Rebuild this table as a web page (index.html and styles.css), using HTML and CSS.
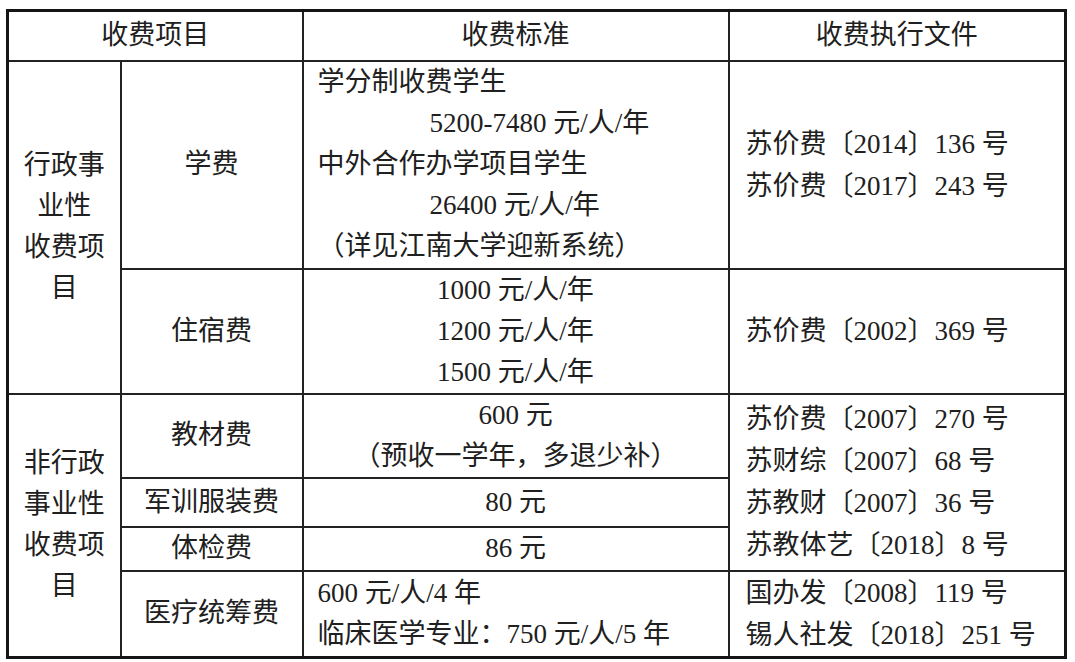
FILE: index.html
```html
<!DOCTYPE html>
<html lang="zh-CN">
<head>
<meta charset="utf-8">
<title>收费项目</title>
<link rel="stylesheet" href="styles.css">
</head>
<body>
<table class="fee">
  <colgroup>
    <col class="c-cat">
    <col class="c-item">
    <col class="c-std">
    <col class="c-doc">
  </colgroup>
  <thead>
    <tr class="r-head">
      <th colspan="2">收费项目</th>
      <th>收费标准</th>
      <th>收费执行文件</th>
    </tr>
  </thead>
  <tbody>
    <tr class="r-tuition">
      <td rowspan="2" class="cat">行政事<br>业性<br>收费项<br>目</td>
      <td class="item">学费</td>
      <td class="std left">
        <div>学分制收费学生</div>
        <div class="ind">5200-7480 元/人/年</div>
        <div>中外合作办学项目学生</div>
        <div class="ind">26400 元/人/年</div>
        <div>（详见江南大学迎新系统）</div>
      </td>
      <td class="doc">
        <div>苏价费〔2014〕136 号</div>
        <div>苏价费〔2017〕243 号</div>
      </td>
    </tr>
    <tr class="r-lodging">
      <td class="item">住宿费</td>
      <td class="std">
        <div>1000 元/人/年</div>
        <div>1200 元/人/年</div>
        <div>1500 元/人/年</div>
      </td>
      <td class="doc">
        <div>苏价费〔2002〕369 号</div>
      </td>
    </tr>
    <tr class="r-books">
      <td rowspan="4" class="cat">非行政<br>事业性<br>收费项<br>目</td>
      <td class="item">教材费</td>
      <td class="std">
        <div>600 元</div>
        <div>（预收一学年，多退少补）</div>
      </td>
      <td rowspan="3" class="doc">
        <div>苏价费〔2007〕270 号</div>
        <div>苏财综〔2007〕68 号</div>
        <div>苏教财〔2007〕36 号</div>
        <div>苏教体艺〔2018〕8 号</div>
      </td>
    </tr>
    <tr class="r-uniform">
      <td class="item">军训服装费</td>
      <td class="std"><div>80 元</div></td>
    </tr>
    <tr class="r-exam">
      <td class="item">体检费</td>
      <td class="std"><div>86 元</div></td>
    </tr>
    <tr class="r-medical">
      <td class="item">医疗统筹费</td>
      <td class="std left">
        <div>600 元/人/4 年</div>
        <div>临床医学专业：750 元/人/5 年</div>
      </td>
      <td class="doc">
        <div>国办发〔2008〕119 号</div>
        <div>锡人社发〔2018〕251 号</div>
      </td>
    </tr>
  </tbody>
</table>
</body>
</html>
```

FILE: styles.css
```css
html, body {
  margin: 0;
  padding: 0;
  background: #ffffff;
}

.fee {
  margin: 9px 0 0 6px;
  width: 1061px;
  table-layout: fixed;
  border-collapse: collapse;
  border: 3px solid #151515;
  font-family: "Liberation Serif", "Noto Sans CJK SC", serif;
  font-size: 27px;
  line-height: 41px;
  color: #202020;
}

.c-cat { width: 113px; }
.c-item { width: 182px; }
.c-std { width: 426px; }
.c-doc { width: 337px; }

.fee th,
.fee td {
  border: 2px solid #222222;
  padding: 0;
  vertical-align: middle;
  text-align: center;
  font-weight: normal;
}

.r-head { height: 50px; }
.r-tuition { height: 208px; }
.r-lodging { height: 124px; }
.r-books { height: 83px; }
.r-uniform { height: 49px; }
.r-exam { height: 44px; }
.r-medical { height: 84px; }

.fee .cat {
  padding: 0 4px;
}

.fee .std.left {
  text-align: left;
  padding-left: 14px;
}

.fee .std .ind {
  padding-left: 112px;
}

.fee .doc {
  text-align: left;
  padding-left: 16px;
  line-height: 42px;
}
```
